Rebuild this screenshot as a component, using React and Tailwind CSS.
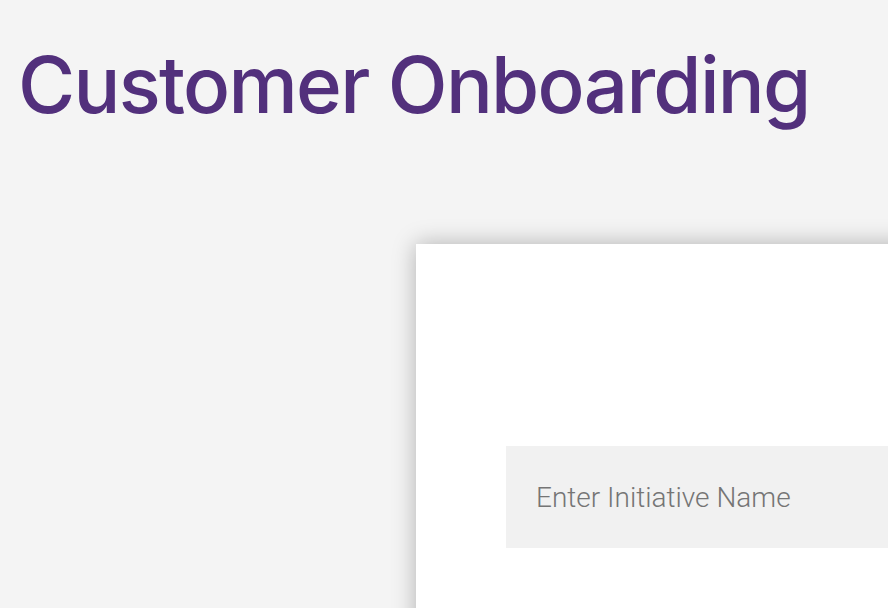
const App = () => {
    return (
        <div className="w-[888px] h-[608px] overflow-hidden bg-[#f4f4f4]">
            {/* Page title */}
            <h1 className="pl-[18px] pt-[30px] text-[78px] leading-[110px] font-medium text-[#52307c] font-['Inter',sans-serif] tracking-[-1.7px] whitespace-nowrap">
                Customer Onboarding
            </h1>

            {/* Form card */}
            <div className="mt-[104px] ml-[416px] w-[600px] h-[500px] bg-white shadow-[0_0_22px_rgba(0,0,0,0.28)] pt-[202px] pl-[90px]">
                <input
                    type="text"
                    placeholder="Enter Initiative Name"
                    className="w-[480px] h-[102px] bg-[#f1f1f1] px-[30px] text-[28px] font-light text-[#333] placeholder:text-[#757575] font-['Roboto',sans-serif] outline-none"
                />
            </div>
        </div>
    );
};

export default App;
